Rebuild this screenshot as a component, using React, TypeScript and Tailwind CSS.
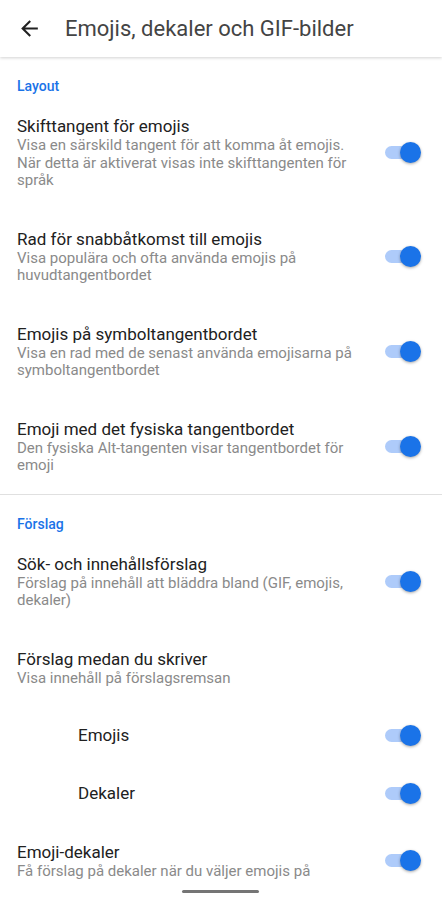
import type { ReactNode } from "react";

type Pref = {
  title: string;
  lines?: string[];
  toggle?: boolean;
  indent?: boolean;
  last?: boolean;
};

const layoutPrefs: Pref[] = [
  {
    title: "Skifttangent för emojis",
    lines: [
      "Visa en särskild tangent för att komma åt emojis.",
      "När detta är aktiverat visas inte skifttangenten för",
      "språk",
    ],
    toggle: true,
  },
  {
    title: "Rad för snabbåtkomst till emojis",
    lines: ["Visa populära och ofta använda emojis på", "huvudtangentbordet"],
    toggle: true,
  },
  {
    title: "Emojis på symboltangentbordet",
    lines: ["Visa en rad med de senast använda emojisarna på", "symboltangentbordet"],
    toggle: true,
  },
  {
    title: "Emoji med det fysiska tangentbordet",
    lines: ["Den fysiska Alt-tangenten visar tangentbordet för", "emoji"],
    toggle: true,
  },
];

function Toggle() {
  return (
    <div className="relative w-[36px] h-[21px] shrink-0">
      <div className="absolute left-0 top-[4px] w-[31px] h-[13px] rounded-full bg-[#aecbfa]" />
      <div className="absolute right-0 top-0 w-[21px] h-[21px] rounded-full bg-[#1a73e8] shadow-[0_1px_3px_rgba(0,0,0,0.35)]" />
    </div>
  );
}

function SectionLabel({ children }: { children: ReactNode }) {
  return (
    <div className="pl-[17px] pt-[19px] h-[39px] text-[14px] leading-[20px] font-medium text-[#1a73e8]">
      {children}
    </div>
  );
}

function PrefRow({ pref }: { pref: Pref }) {
  if (pref.indent) {
    return (
      <div className="flex items-center h-[58px] pl-[78px] pr-[21px]">
        <div className="flex-1 text-[17px] leading-[22px] text-[#212121]">{pref.title}</div>
        <Toggle />
      </div>
    );
  }
  return (
    <div
      className={
        pref.last
          ? "flex items-center pl-[17px] pr-[21px] pt-[19px] pb-[36px]"
          : "flex items-center pl-[17px] pr-[21px] py-[19px]"
      }
    >
      <div className="flex-1 min-w-0">
        <div className="text-[17px] leading-[22px] text-[#212121]">{pref.title}</div>
        {pref.lines?.map((l) => (
          <div key={l} className="text-[15px] leading-[17.5px] text-[#8a8a8a] whitespace-nowrap">
            {l}
          </div>
        ))}
      </div>
      {pref.toggle && <Toggle />}
    </div>
  );
}

export default function App() {
  return (
    <div
      className="w-[442px] h-[900px] bg-white overflow-hidden relative"
      style={{ fontFamily: "Roboto, 'Liberation Sans', sans-serif" }}
    >
      <div className="h-[57px] flex items-center shadow-[0_1px_3px_rgba(0,0,0,0.18)] relative z-10 bg-white">
        <svg viewBox="0 0 24 24" className="w-[25px] h-[25px] ml-[17px] fill-[#212121]">
          <path d="M20 11H7.83l5.59-5.59L12 4l-8 8 8 8 1.41-1.41L7.83 13H20v-2z" />
        </svg>
        <div className="ml-[23px] text-[22px] leading-[28px] text-[#444444]">
          Emojis, dekaler och GIF-bilder
        </div>
      </div>

      <SectionLabel>Layout</SectionLabel>
      {layoutPrefs.map((p) => (
        <PrefRow key={p.title} pref={p} />
      ))}

      <div className="h-px bg-[#e0e0e0]" />

      <SectionLabel>Förslag</SectionLabel>
      <PrefRow
        pref={{
          title: "Sök- och innehållsförslag",
          lines: ["Förslag på innehåll att bläddra bland (GIF, emojis,", "dekaler)"],
          toggle: true,
        }}
      />
      <PrefRow
        pref={{ title: "Förslag medan du skriver", lines: ["Visa innehåll på förslagsremsan"] }}
      />
      <PrefRow pref={{ title: "Emojis", indent: true, toggle: true }} />
      <PrefRow pref={{ title: "Dekaler", indent: true, toggle: true }} />
      <PrefRow
        pref={{
          title: "Emoji-dekaler",
          lines: ["Få förslag på dekaler när du väljer emojis på"],
          toggle: true,
          last: true,
        }}
      />

      <div className="absolute left-[182px] top-[890px] w-[77px] h-[3px] rounded-full bg-[#757575]" />
    </div>
  );
}
